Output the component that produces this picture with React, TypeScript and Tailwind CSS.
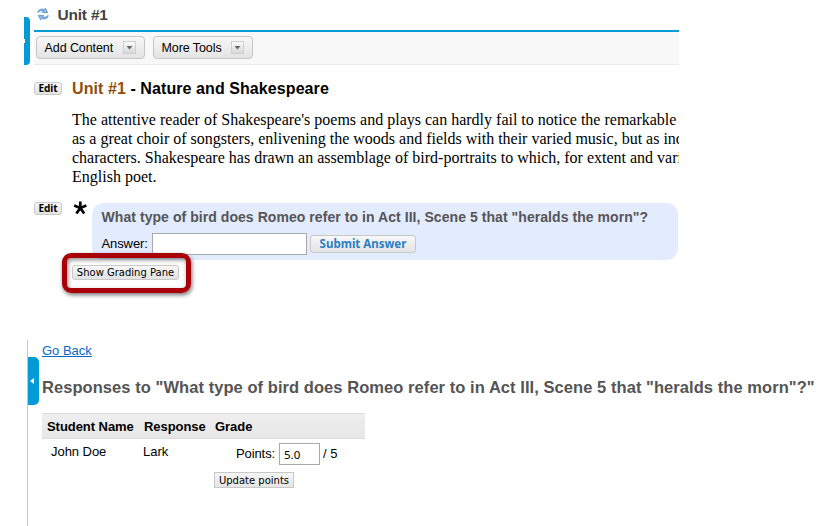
import React from "react";

const SANS = "font-['Liberation_Sans',Arial,sans-serif]";
const VERDANA = "font-['DejaVu_Sans',Verdana,sans-serif]";

function EditButton() {
  return (
    <button className="block h-[13px] w-7 shrink-0 rounded-[3px] border border-[#c9c9c9] bg-linear-to-b from-[#f8f8f8] to-[#e2e2e2] text-center font-['Noto_Sans',sans-serif] text-[10px] leading-[11px] font-bold text-black">
      Edit
    </button>
  );
}

function MenuButton({ label, className }: { label: string; className: string }) {
  return (
    <button className={`flex h-[23px] items-center justify-between rounded-[4px] border border-[#c6c6c6] bg-linear-to-b from-[#f7f7f7] to-[#e4e4e4] pr-2 pl-[7.5px] text-[12.5px] tracking-[-0.08px] whitespace-nowrap text-black ${className}`}>
      <span className="pt-px">{label}</span>
      <span className="flex h-[13px] w-[13px] items-center justify-center border border-[#cfcfcf] bg-linear-to-b from-[#fbfbfb] to-[#d8d8d8]">
        <svg width="7" height="4" viewBox="0 0 7 4"><path d="M0.5 0H6.5L3.5 3.5Z" fill="#666" /></svg>
      </span>
    </button>
  );
}

function SyncIcon() {
  return (
    <svg width="12" height="14" viewBox="0 0 12 14" fill="none">
      <path d="M0.8 5.6C1 2.6 4 1.6 7.4 2.4L8.4 1.2L10.6 5.6L5.4 5.4L6.6 4.2C4.4 3.4 2.4 3.8 0.8 5.6Z" fill="#8dbcea" stroke="#3f7fc0" strokeWidth="0.7" />
      <path d="M11.2 8.4C11 11.4 8 12.4 4.6 11.6L3.6 12.8L1.4 8.4L6.6 8.6L5.4 9.8C7.6 10.6 9.6 10.2 11.2 8.4Z" fill="#8dbcea" stroke="#3f7fc0" strokeWidth="0.7" />
    </svg>
  );
}

const passage = [
  "The attentive reader of Shakespeare's poems and plays can hardly fail to notice the remarkable",
  "as a great choir of songsters, enlivening the woods and fields with their varied music, but as ind",
  "characters. Shakespeare has drawn an assemblage of bird-portraits to which, for extent and vari",
  "English poet.",
];

function LessonPane() {
  return (
    <section className="flex h-[340px] pl-6">
      <div className="w-[10px] shrink-0 pt-[17px]">
        <div className="flex h-12 w-[6px] items-center rounded-r-[4px] bg-[#039bd6]">
          <span className="h-1 w-px bg-white" />
        </div>
      </div>
      <div className="w-[645px]">
        <header className="flex h-8 border-b-2 border-[#039bd6] pt-[6px] pl-[3px]">
          <div className="mt-[1px] w-[20.5px]"><SyncIcon /></div>
          <h1 className="text-[15.5px] leading-[18px] font-bold tracking-[-0.2px] text-[#444]">Unit #1</h1>
        </header>
        <div className="flex h-[33px] gap-2 border-b border-[#ebebeb] bg-[#f8f8f8] pt-1 pl-[2px]">
          <MenuButton label="Add Content" className="w-[109px]" />
          <MenuButton label="More Tools" className="w-[100px]" />
        </div>
        <div className="flex h-[138px] gap-[10px] overflow-hidden pt-[14px]">
          <div className="pt-[3px]"><EditButton /></div>
          <div className="w-[607px] overflow-hidden">
            <h2 className="text-[16px] leading-[19px] font-bold tracking-[0.08px] text-black"><span className="text-[#8f4f0c]">Unit #1</span> - Nature and Shakespeare</h2>
            <div className="mt-[12px] font-['Liberation_Serif',serif] text-[16px] leading-[19px] whitespace-nowrap text-black">
              {passage.map((line) => <p key={line}>{line}</p>)}
            </div>
          </div>
        </div>
        <div className="flex">
          <div className="-mt-[1px] w-[38px]"><EditButton /></div>
          <div className="relative h-[100px] w-[606px]">
            <div className="flex">
              <div className="w-5 shrink-0">
                <svg width="16" height="14" viewBox="0 0 16 14" className="-mt-[2px]"><path d="M8.3 7V0.5M8.3 7L2.2 4.6M8.3 7L14.4 4.6M8.3 7L4.4 12.6M8.3 7L12.2 12.6" stroke="#000" strokeWidth="2.7" /></svg>
              </div>
              <div className="h-[57px] w-[586px] rounded-[12px] bg-[#e3ebff] pt-[5px] pl-[9.5px]">
                <h3 className="text-[14px] leading-[18px] font-bold tracking-[0.06px] whitespace-nowrap text-[#555]">What type of bird does Romeo refer to in Act III, Scene 5 that "heralds the morn"?</h3>
                <div className="mt-[7px] flex items-center text-[13px] text-black">
                  <label className="w-[50.5px] tracking-[-0.1px]">Answer:</label>
                  <input aria-label="Answer" className="h-[22px] w-[155px] border border-[#aaa] bg-white" />
                  <button className="ml-[3px] h-[18px] w-[106px] rounded-[3px] border border-[#c8c8c8] bg-linear-to-b from-[#f8f8f8] to-[#e4e4e4] font-['Noto_Sans',sans-serif] text-[11.5px] leading-4 font-bold whitespace-nowrap text-[#2b7fc3]">Submit Answer</button>
                </div>
              </div>
            </div>
            <div className="absolute top-[50px] left-[-10px] h-[40px] w-[129px] rounded-[9px] border-5 border-[#a90008] pt-[7px] pl-[5px] shadow-[1px_2px_4px_rgba(0,0,0,0.55),inset_1px_2px_4px_rgba(0,0,0,0.45)]">
              <button className={`block h-[15px] w-[107px] rounded-[3px] border border-[#c9c9c9] bg-linear-to-b from-[#f8f8f8] to-[#e2e2e2] ${VERDANA} text-[10px] leading-[14px] whitespace-nowrap text-black`}>Show Grading Pane</button>
            </div>
          </div>
        </div>
      </div>
    </section>
  );
}

function GradingPane() {
  return (
    <section className="ml-[27px] flex h-[186px] border-l border-[#c8c8c8]">
      <div className="w-[14px] shrink-0 pt-[17px]">
        <div className="flex h-12 w-[11px] items-center rounded-r-[5px] bg-[#039bd6] pl-[2px]">
          <svg width="4" height="6" viewBox="0 0 4 6"><path d="M4 0V6L0 3Z" fill="#fff" /></svg>
        </div>
      </div>
      <div className="whitespace-nowrap">
        <a href="#" className="block pt-[2px] text-[13px] leading-[17px] text-[#0968c6] underline">Go Back</a>
        <h2 className="mt-[18px] text-[16.5px] leading-5 font-bold tracking-[0.06px] text-[#555]">Responses to "What type of bird does Romeo refer to in Act III, Scene 5 that "heralds the morn"?"</h2>
        <div className="mt-[16px] w-[323px] text-[13px] text-black">
          <div className="grid h-[26px] grid-cols-[97px_71px_1fr] items-center border-y border-[#dedede] bg-linear-to-b from-[#eee] to-[#e7e7e7] pt-[2px] pl-[5px] font-bold tracking-[-0.05px]">
            <span>Student Name</span><span>Response</span><span>Grade</span>
          </div>
          <div className="grid grid-cols-[92px_71px_1fr] pt-1 pl-[9px]">
            <span className="leading-[18px] tracking-[-0.05px]">John Doe</span><span className="leading-[18px]">Lark</span>
            <div>
              <div className="flex items-center pl-[22px]">
                <span className="w-[43px] tracking-[-0.1px]">Points:</span>
                <input aria-label="Points" defaultValue="5.0" className="h-[22px] w-[41px] border border-[#aaa] bg-white px-1 font-['Noto_Sans',sans-serif] text-[11.5px]" />
                <span className="ml-[3px]">/ 5</span>
              </div>
              <button className={`mt-[7px] block h-4 w-20 border border-[#c8c8c8] bg-linear-to-b from-[#f5f5f5] to-[#e6e6e6] pt-px ${VERDANA} text-[10px] leading-[14px] text-black`}>Update points</button>
            </div>
          </div>
        </div>
      </div>
    </section>
  );
}

export default function App() {
  return <main className={`h-[526px] w-[830px] overflow-hidden bg-white ${SANS}`}><LessonPane /><GradingPane /></main>;
}
